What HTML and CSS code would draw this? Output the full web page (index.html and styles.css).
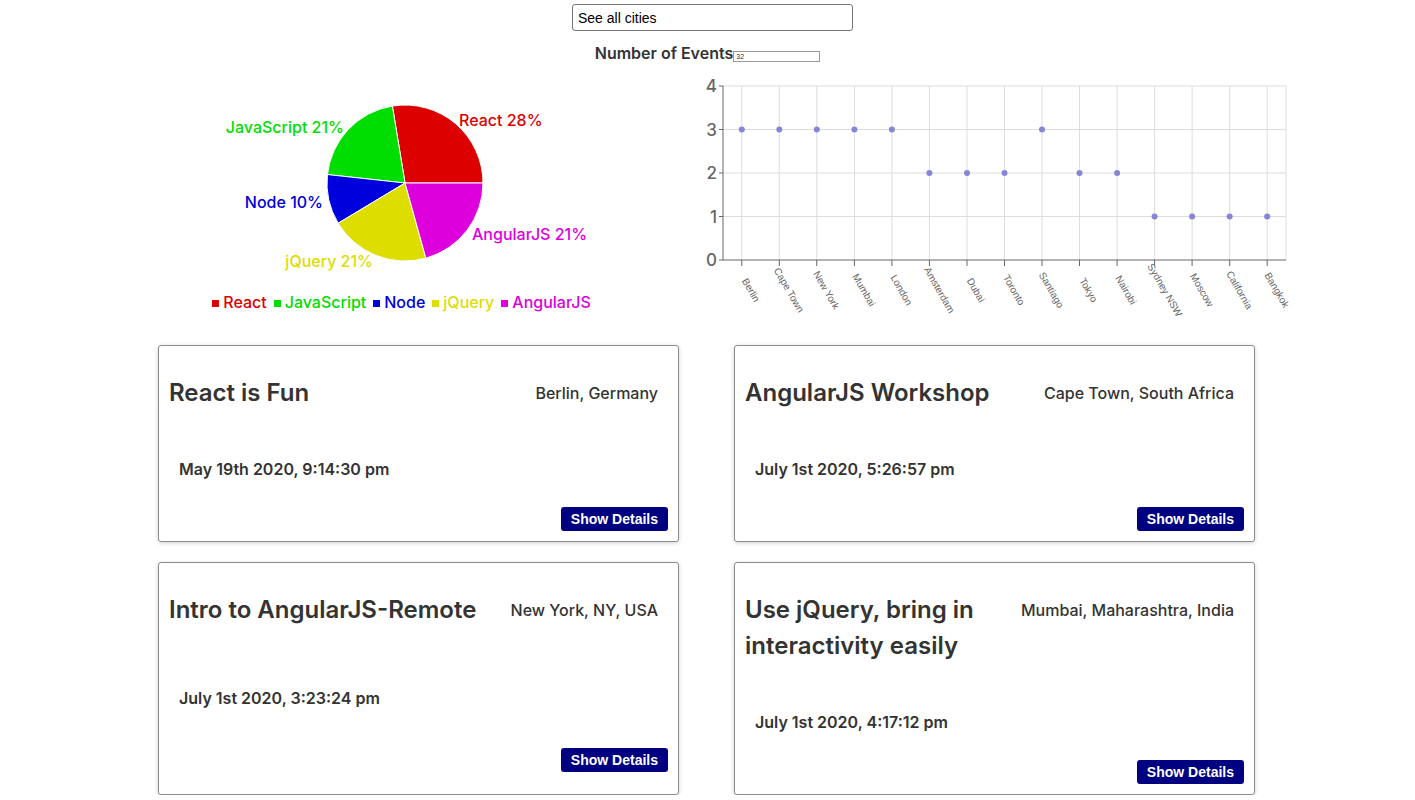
FILE: index.html
```html
<!DOCTYPE html>
<html lang="en">
<head>
<meta charset="utf-8">
<title>Meet App</title>
<link rel="stylesheet" href="styles.css">
</head>
<body>
<div class="city-search">
  <input class="city-input" type="text" value="See all cities">
</div>
<div class="event-count">
  <label class="count-label">Number of Events</label><input class="count-input" type="text" value="32">
</div>

<div class="charts">
  <div class="pie-block">
    <svg class="pie" width="500" height="220" viewBox="0 0 500 220">
      <g stroke="#fff" stroke-width="1">
        <path fill="#dd0000" d="M250,113 L328,113 A78,78 0 0 0 237.38,36.03 Z"/>
        <path fill="#00dd00" d="M250,113 L237.38,36.03 A78,78 0 0 0 172.46,104.56 Z"/>
        <path fill="#0000dd" d="M250,113 L172.46,104.56 A78,78 0 0 0 183.17,153.21 Z"/>
        <path fill="#dddd00" d="M250,113 L183.17,153.21 A78,78 0 0 0 270.87,188.16 Z"/>
        <path fill="#dd00dd" d="M250,113 L270.87,188.16 A78,78 0 0 0 328,113 Z"/>
      </g>
      <g class="pie-labels">
        <text x="304" y="56" fill="#dd0000">React 28%</text>
        <text x="189" y="63" fill="#00dd00" text-anchor="end">JavaScript 21%</text>
        <text x="168" y="138" fill="#0000dd" text-anchor="end">Node 10%</text>
        <text x="317" y="170" fill="#dd00dd">AngularJS 21%</text>
        <text x="218" y="197" fill="#dddd00" text-anchor="end">jQuery 21%</text>
      </g>
    </svg>
    <ul class="legend">
      <li class="legend-item react"><span class="swatch"></span>React</li>
      <li class="legend-item js"><span class="swatch"></span>JavaScript</li>
      <li class="legend-item node"><span class="swatch"></span>Node</li>
      <li class="legend-item jq"><span class="swatch"></span>jQuery</li>
      <li class="legend-item ng"><span class="swatch"></span>AngularJS</li>
    </ul>
  </div>

  <svg class="scatter" width="650" height="255" viewBox="0 0 650 255">
    <g class="grid" stroke="#dddddd" stroke-width="1">
      <line x1="68" y1="16" x2="631" y2="16"/>
      <line x1="68" y1="59.5" x2="631" y2="59.5"/>
      <line x1="68" y1="103" x2="631" y2="103"/>
      <line x1="68" y1="146.5" x2="631" y2="146.5"/>
      <line x1="86.8" y1="16" x2="86.8" y2="190"/>
      <line x1="124.3" y1="16" x2="124.3" y2="190"/>
      <line x1="161.8" y1="16" x2="161.8" y2="190"/>
      <line x1="199.4" y1="16" x2="199.4" y2="190"/>
      <line x1="236.9" y1="16" x2="236.9" y2="190"/>
      <line x1="274.4" y1="16" x2="274.4" y2="190"/>
      <line x1="312" y1="16" x2="312" y2="190"/>
      <line x1="349.5" y1="16" x2="349.5" y2="190"/>
      <line x1="387" y1="16" x2="387" y2="190"/>
      <line x1="424.5" y1="16" x2="424.5" y2="190"/>
      <line x1="462.1" y1="16" x2="462.1" y2="190"/>
      <line x1="499.6" y1="16" x2="499.6" y2="190"/>
      <line x1="537.1" y1="16" x2="537.1" y2="190"/>
      <line x1="574.7" y1="16" x2="574.7" y2="190"/>
      <line x1="612.2" y1="16" x2="612.2" y2="190"/>
      <line x1="631" y1="16" x2="631" y2="190"/>
    </g>
    <g class="axes" stroke="#666" stroke-width="1">
      <line x1="68" y1="16" x2="68" y2="190"/>
      <line x1="68" y1="190" x2="631" y2="190"/>
      <line x1="64" y1="16" x2="68" y2="16"/>
      <line x1="64" y1="59.5" x2="68" y2="59.5"/>
      <line x1="64" y1="103" x2="68" y2="103"/>
      <line x1="64" y1="146.5" x2="68" y2="146.5"/>
      <line x1="64" y1="190" x2="68" y2="190"/>
      <line x1="86.8" y1="190" x2="86.8" y2="196"/>
      <line x1="124.3" y1="190" x2="124.3" y2="196"/>
      <line x1="161.8" y1="190" x2="161.8" y2="196"/>
      <line x1="199.4" y1="190" x2="199.4" y2="196"/>
      <line x1="236.9" y1="190" x2="236.9" y2="196"/>
      <line x1="274.4" y1="190" x2="274.4" y2="196"/>
      <line x1="312" y1="190" x2="312" y2="196"/>
      <line x1="349.5" y1="190" x2="349.5" y2="196"/>
      <line x1="387" y1="190" x2="387" y2="196"/>
      <line x1="424.5" y1="190" x2="424.5" y2="196"/>
      <line x1="462.1" y1="190" x2="462.1" y2="196"/>
      <line x1="499.6" y1="190" x2="499.6" y2="196"/>
      <line x1="537.1" y1="190" x2="537.1" y2="196"/>
      <line x1="574.7" y1="190" x2="574.7" y2="196"/>
      <line x1="612.2" y1="190" x2="612.2" y2="196"/>
    </g>
    <g class="y-labels" text-anchor="end">
      <text x="62" y="16" dy="0.36em">4</text>
      <text x="62" y="59.5" dy="0.36em">3</text>
      <text x="62" y="103" dy="0.36em">2</text>
      <text x="62" y="146.5" dy="0.36em">1</text>
      <text x="62" y="190" dy="0.36em">0</text>
    </g>
    <g class="x-labels" text-anchor="middle">
      <text x="96" y="220" dy="0.35em" transform="rotate(60 96 220)">Berlin</text>
      <text x="134" y="220" dy="0.35em" transform="rotate(60 134 220)">Cape Town</text>
      <text x="171.5" y="220" dy="0.35em" transform="rotate(60 171.5 220)">New York</text>
      <text x="209" y="220" dy="0.35em" transform="rotate(60 209 220)">Mumbai</text>
      <text x="246.5" y="220" dy="0.35em" transform="rotate(60 246.5 220)">London</text>
      <text x="284.5" y="220" dy="0.35em" transform="rotate(60 284.5 220)">Amsterdam</text>
      <text x="321" y="220" dy="0.35em" transform="rotate(60 321 220)">Dubai</text>
      <text x="359" y="220" dy="0.35em" transform="rotate(60 359 220)">Toronto</text>
      <text x="396.5" y="220" dy="0.35em" transform="rotate(60 396.5 220)">Santiago</text>
      <text x="433.5" y="220" dy="0.35em" transform="rotate(60 433.5 220)">Tokyo</text>
      <text x="471" y="220" dy="0.35em" transform="rotate(60 471 220)">Nairobi</text>
      <text x="510" y="220" dy="0.35em" transform="rotate(60 510 220)">Sydney NSW</text>
      <text x="547" y="220" dy="0.35em" transform="rotate(60 547 220)">Moscow</text>
      <text x="584.5" y="220" dy="0.35em" transform="rotate(60 584.5 220)">California</text>
      <text x="622" y="220" dy="0.35em" transform="rotate(60 622 220)">Bangkok</text>
    </g>
    <g class="dots" fill="#8884d8">
      <circle cx="86.8" cy="59.5" r="3"/>
      <circle cx="124.3" cy="59.5" r="3"/>
      <circle cx="161.8" cy="59.5" r="3"/>
      <circle cx="199.4" cy="59.5" r="3"/>
      <circle cx="236.9" cy="59.5" r="3"/>
      <circle cx="274.4" cy="103" r="3"/>
      <circle cx="312" cy="103" r="3"/>
      <circle cx="349.5" cy="103" r="3"/>
      <circle cx="387" cy="59.5" r="3"/>
      <circle cx="424.5" cy="103" r="3"/>
      <circle cx="462.1" cy="103" r="3"/>
      <circle cx="499.6" cy="146.5" r="3"/>
      <circle cx="537.1" cy="146.5" r="3"/>
      <circle cx="574.7" cy="146.5" r="3"/>
      <circle cx="612.2" cy="146.5" r="3"/>
    </g>
  </svg>
</div>

<div class="events">
  <div class="card">
    <div class="card-head">
      <h2 class="title">React is Fun</h2>
      <span class="loc">Berlin, Germany</span>
    </div>
    <p class="date">May 19th 2020, 9:14:30 pm</p>
    <div class="actions"><button class="btn">Show Details</button></div>
  </div>
  <div class="card">
    <div class="card-head">
      <h2 class="title">AngularJS Workshop</h2>
      <span class="loc">Cape Town, South Africa</span>
    </div>
    <p class="date">July 1st 2020, 5:26:57 pm</p>
    <div class="actions"><button class="btn">Show Details</button></div>
  </div>
  <div class="card">
    <div class="card-head">
      <h2 class="title">Intro to AngularJS-Remote</h2>
      <span class="loc">New York, NY, USA</span>
    </div>
    <p class="date">July 1st 2020, 3:23:24 pm</p>
    <div class="actions"><button class="btn">Show Details</button></div>
  </div>
  <div class="card">
    <div class="card-head">
      <h2 class="title">Use jQuery, bring in interactivity easily</h2>
      <span class="loc">Mumbai, Maharashtra, India</span>
    </div>
    <p class="date">July 1st 2020, 4:17:12 pm</p>
    <div class="actions"><button class="btn">Show Details</button></div>
  </div>
</div>
</body>
</html>
```

FILE: styles.css
```css
body {
  margin: 0;
  font-family: Inter, "Noto Sans", sans-serif;
  color: #333;
  background: #fff;
}

.city-search {
  display: flex;
  justify-content: center;
  padding-top: 4px;
  padding-left: 10px;
}

.city-input {
  box-sizing: border-box;
  width: 281px;
  height: 27px;
  border: 1px solid #767676;
  border-radius: 3px;
  padding: 0 5px;
  font-family: "Liberation Sans", Arial, sans-serif;
  font-size: 14px;
  color: #000;
}

.event-count {
  display: flex;
  justify-content: center;
  align-items: baseline;
  margin-top: 10px;
  line-height: 24px;
}

.count-label {
  font-size: 16px;
  font-weight: 600;
  color: #333;
}

.count-input {
  box-sizing: border-box;
  width: 87px;
  height: 11px;
  border: 1px solid #999;
  padding: 0 2px;
  font-family: "Liberation Sans", Arial, sans-serif;
  font-size: 7px;
  color: #333;
}

.charts {
  display: flex;
  align-items: flex-start;
  margin-top: 5px;
  margin-left: 155px;
  height: 255px;
  margin-bottom: 20px;
}

.pie-block {
  width: 500px;
  display: flex;
  flex-direction: column;
}

.pie {
  display: block;
}

.pie-labels {
  font-family: Inter, sans-serif;
  font-size: 16px;
  font-weight: 500;
}

.legend {
  list-style: none;
  margin: 0;
  padding: 0 7px 0 0;
  display: flex;
  justify-content: center;
  gap: 7px;
  font-size: 16px;
  font-weight: 500;
  line-height: 24px;
}

.legend-item {
  display: flex;
  align-items: center;
  gap: 4px;
}

.swatch {
  width: 7px;
  height: 7px;
  margin-top: 3px;
}

.react { color: #dd0000; }
.react .swatch { background: #dd0000; }
.js { color: #00dd00; }
.js .swatch { background: #00dd00; }
.node { color: #0000dd; }
.node .swatch { background: #0000dd; }
.jq { color: #dddd00; }
.jq .swatch { background: #dddd00; }
.ng { color: #dd00dd; }
.ng .swatch { background: #dd00dd; }

.scatter {
  display: block;
}

.y-labels {
  font-family: Inter, sans-serif;
  font-size: 17px;
  font-weight: 500;
  fill: #666;
}

.x-labels {
  font-family: "Liberation Sans", Arial, sans-serif;
  font-size: 10px;
  fill: #666;
}

.events {
  display: grid;
  grid-template-columns: 521px 521px;
  column-gap: 55px;
  row-gap: 20px;
  justify-content: center;
  padding-right: 2px;
}

.card {
  box-sizing: border-box;
  display: flex;
  flex-direction: column;
  padding: 10px;
  border: 1px solid #8c8c8c;
  border-radius: 3px;
  box-shadow: 0 1px 4px rgba(0, 0, 0, 0.18);
  background: #fff;
}

.card-head {
  display: flex;
  justify-content: space-between;
  align-items: flex-start;
  gap: 20px;
  margin-top: 19px;
}

.title {
  margin: 0;
  font-size: 24px;
  line-height: 36px;
  font-weight: 600;
  color: #333;
}

.loc {
  flex-shrink: 0;
  white-space: nowrap;
  margin-right: 10px;
  font-size: 16px;
  line-height: 36px;
  font-weight: 500;
  color: #333;
}

.date {
  margin: auto 0 0;
  padding: 46px 0 0 10px;
  font-size: 16px;
  line-height: 25px;
  font-weight: 600;
  color: #333;
}

.actions {
  margin: auto 0;
  padding-top: 25px;
  display: flex;
  justify-content: flex-end;
}

.btn {
  border: none;
  border-radius: 3px;
  background: #000080;
  color: #fff;
  font-family: "Liberation Sans", Arial, sans-serif;
  font-weight: bold;
  font-size: 14px;
  line-height: 16px;
  padding: 4px 10px;
}
```
